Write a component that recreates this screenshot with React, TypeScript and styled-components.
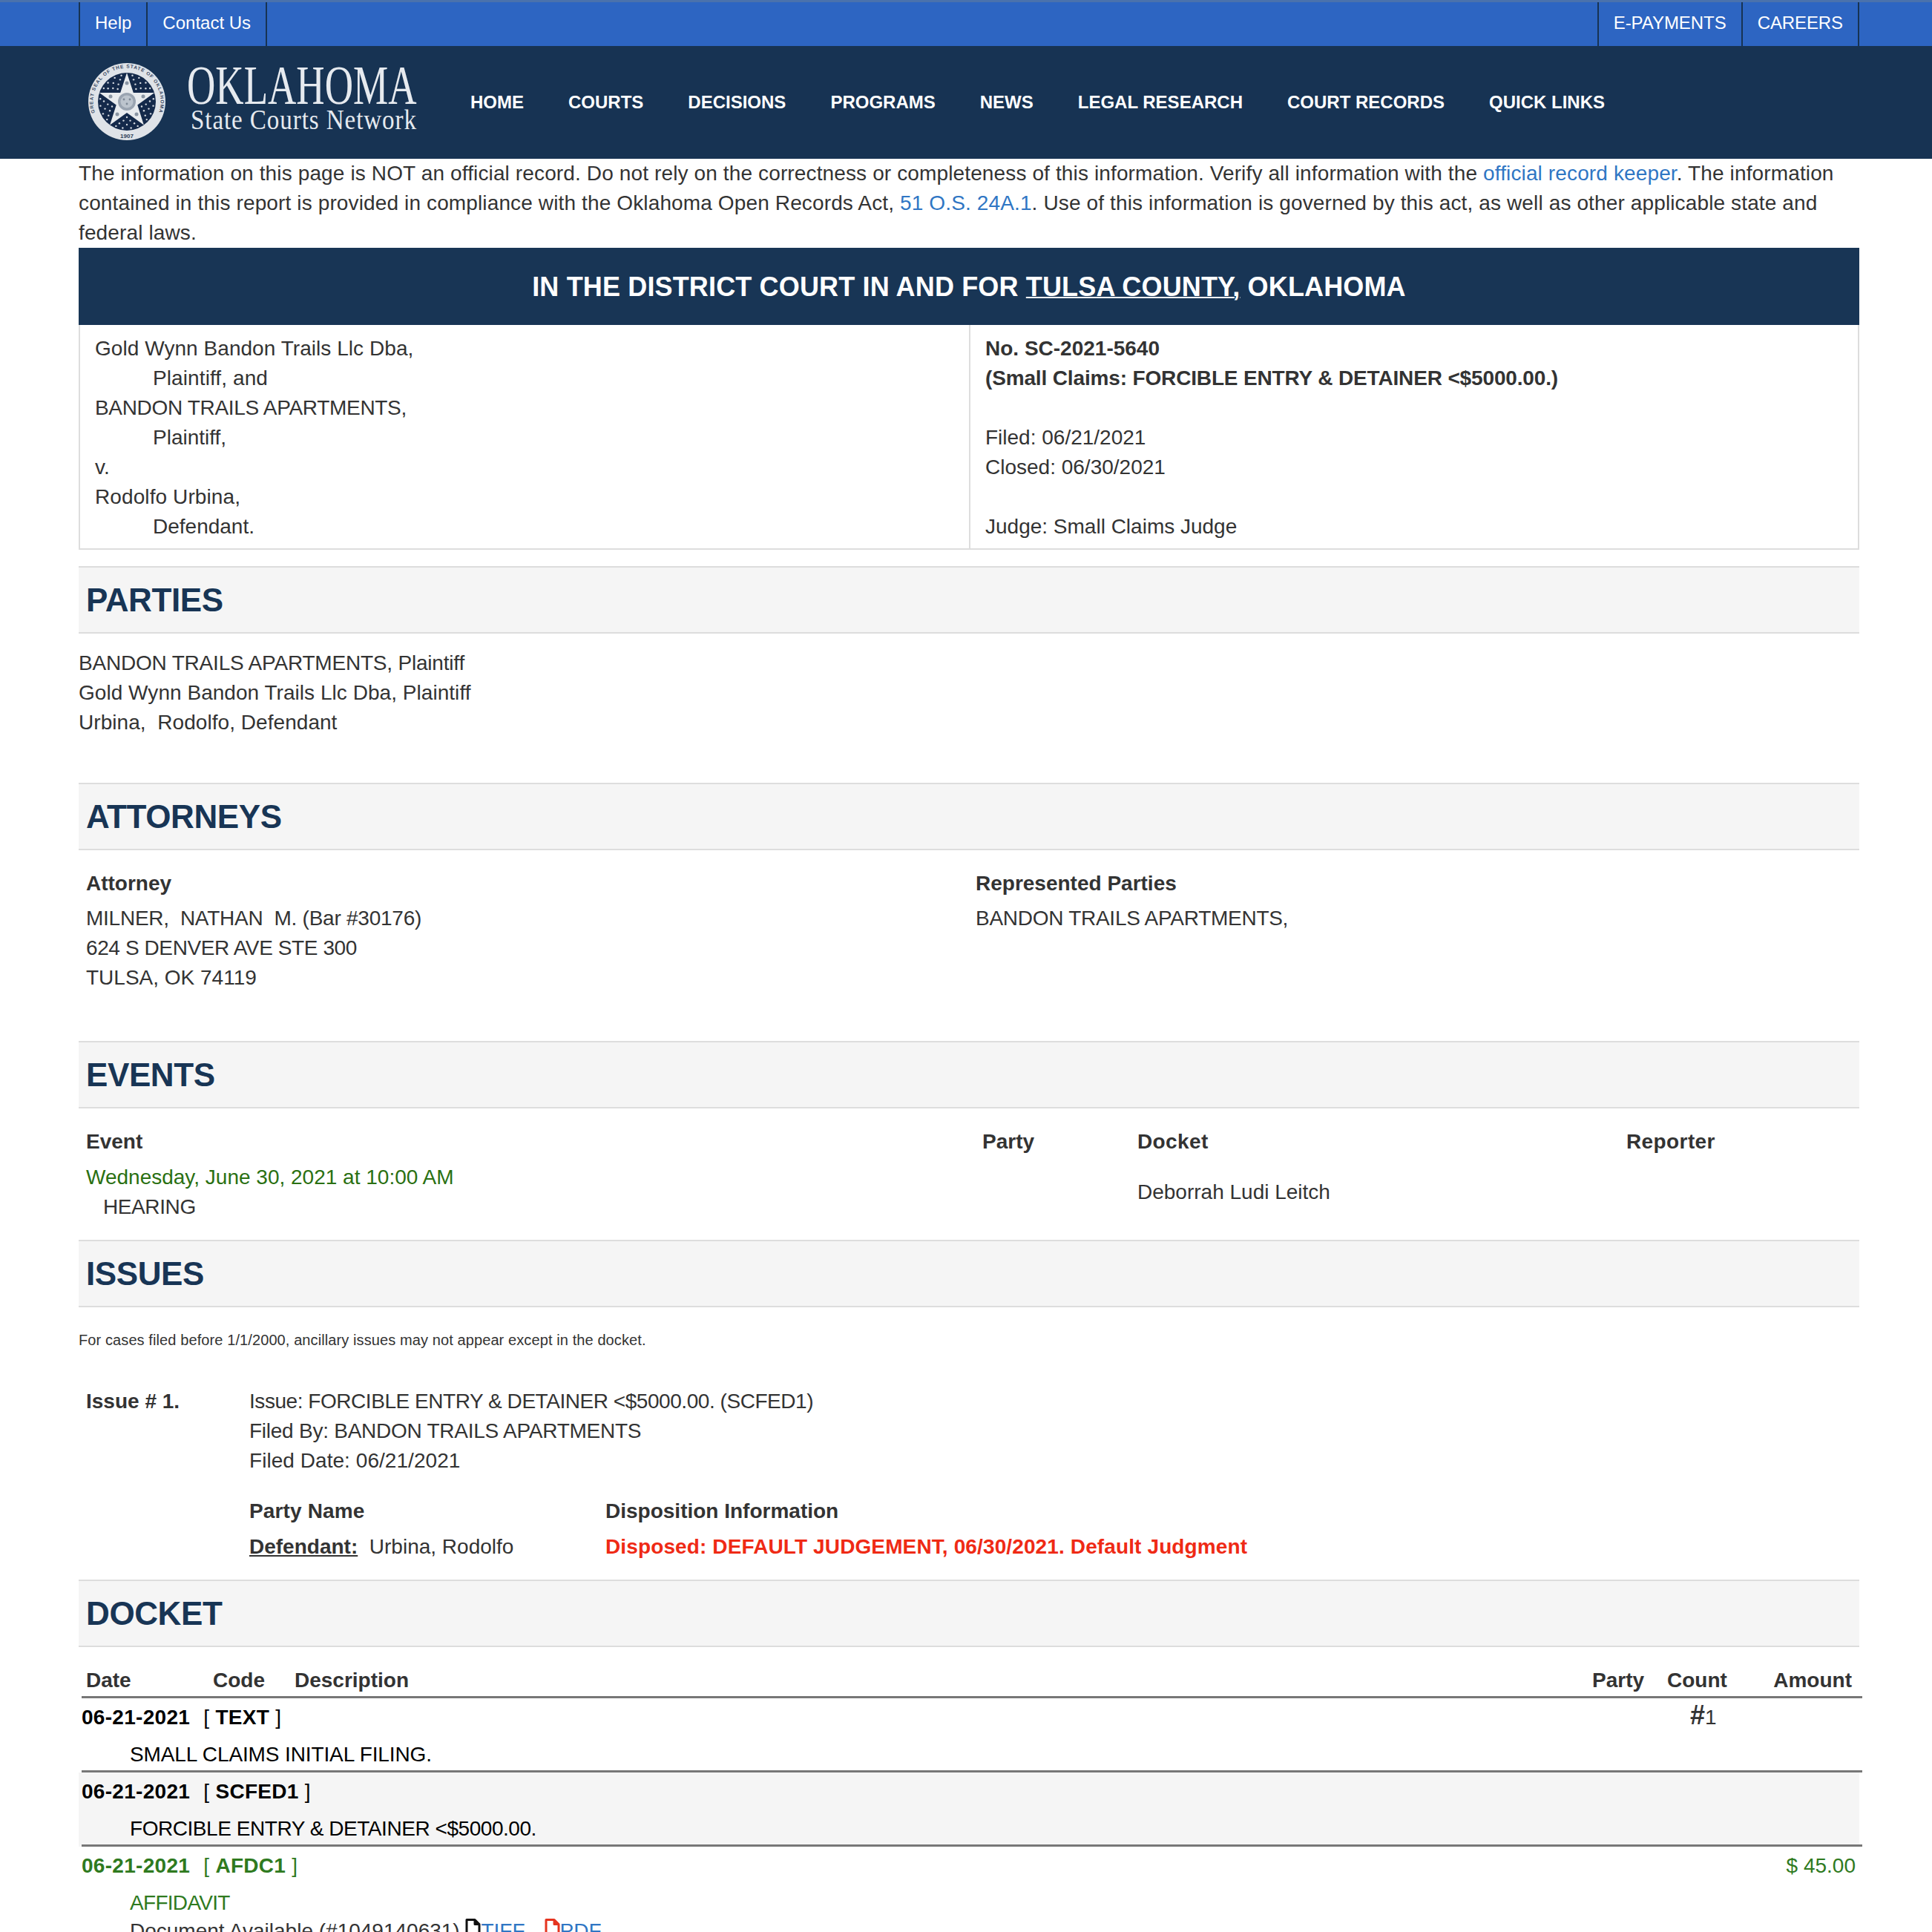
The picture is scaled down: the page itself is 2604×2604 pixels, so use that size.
import React from "react";
import styled, { createGlobalStyle } from "styled-components";

const Global = createGlobalStyle`
  html, body {
    margin: 0;
    padding: 0;
    height: 2604px;
    overflow: hidden;
    background: #fff;
  }
  body {
    font-family: "Liberation Sans", Arial, sans-serif;
    font-size: 28px;
    line-height: 40px;
    color: #333;
  }
  a {
    color: #2f76c4;
    text-decoration: none;
  }
`;

const TopBar = styled.div`
  height: 59px;
  background: #2d65c2;
  border-top: 3px solid #4a72ad;
  padding: 0 98px 0 106px;
  display: flex;
  justify-content: space-between;
`;

const TopLinks = styled.ul`
  display: flex;
  margin: 0;
  padding: 0;
  list-style: none;
  border-left: 2px solid #173353;
`;

const TopLink = styled.li<{ $track?: number }>`
  padding: 0 20px;
  border-right: 2px solid #173353;
  font-size: 24px;
  line-height: 56px;
  letter-spacing: ${(p) => p.$track ?? 0}px;

  a {
    color: #fff;
  }
`;

const Header = styled.header`
  height: 152px;
  background: #173353;
  padding-left: 118px;
  display: flex;
  align-items: center;
`;

const Seal = styled.svg`
  width: 106px;
  height: 106px;
  flex: none;
  margin-top: -2px;
`;

const Brand = styled.div`
  width: 310px;
  margin: -10px 0 0 28px;
  color: #e6eaef;
  font-family: "Liberation Serif", serif;
  white-space: nowrap;
`;

const BrandTitle = styled.div`
  font-size: 74px;
  line-height: 58px;
  transform: scaleX(0.717);
  transform-origin: left center;
`;

const BrandSub = styled.div`
  font-size: 37px;
  line-height: 36px;
  margin-left: 5px;
  letter-spacing: 1px;
  transform: scaleX(0.895);
  transform-origin: left center;
`;

const MainNav = styled.nav`
  display: flex;
  gap: 60px;
  margin-left: 72px;
`;

const NavLink = styled.a`
  color: #fff;
  font-size: 24px;
  font-weight: 700;
  text-transform: uppercase;
`;

const Content = styled.main`
  width: 2400px;
  margin-left: 106px;
`;

const Notice = styled.p`
  margin: 0;
  letter-spacing: 0.13px;
`;

const Banner = styled.h1`
  margin: 0;
  height: 104px;
  background: #183555;
  color: #fff;
  font-size: 36px;
  line-height: 106px;
  font-weight: 700;
  text-align: center;
  letter-spacing: 0.15px;

  u {
    text-decoration-thickness: 2px;
  }
`;

const CaseTable = styled.div`
  display: grid;
  grid-template-columns: 1198px 1fr;
  border: 2px solid #ddd;
  border-top: 0;
`;

const CaseCell = styled.div<{ $divided?: boolean }>`
  padding: 12px 20px 0;
  height: 301px;
  box-sizing: border-box;
  border-left: ${(p) => (p.$divided ? "2px solid #ddd" : "0")};
`;

const Line = styled.div<{ $track?: number; $indent?: number; $bold?: boolean }>`
  padding-left: ${(p) => p.$indent ?? 0}px;
  letter-spacing: ${(p) => p.$track ?? 0}px;
  font-weight: ${(p) => (p.$bold ? 700 : 400)};
  white-space: pre;
`;

const Blank = styled.div`
  height: 40px;
`;

const SectionTitle = styled.h2<{ $top: number }>`
  margin: ${(p) => p.$top}px 0 0;
  height: 87px;
  padding-left: 10px;
  background: #f5f5f5;
  border-top: 2px solid #ddd;
  border-bottom: 2px solid #ddd;
  color: #183555;
  font-size: 44px;
  line-height: 88px;
  font-weight: 700;
  letter-spacing: -0.4px;
`;

const PartyList = styled.div`
  margin-top: 20px;
`;

const Grid = styled.div<{ $cols: string; $top: number }>`
  display: grid;
  grid-template-columns: ${(p) => p.$cols};
  margin-top: ${(p) => p.$top}px;
  padding-left: 10px;
  white-space: pre;
`;

const Label = styled.div<{ $gap?: number; $track?: number }>`
  font-weight: 700;
  margin-bottom: ${(p) => p.$gap ?? 8}px;
  letter-spacing: ${(p) => p.$track ?? 0}px;
`;

const When = styled.div`
  color: #2a7012;
`;

const Middle = styled.div`
  align-self: center;
`;

const Note = styled.p`
  margin: 24px 0 0;
  font-size: 20px;
  line-height: 40px;
  letter-spacing: 0.1px;
`;

const IssueRow = styled.div`
  display: grid;
  grid-template-columns: 220px 1fr;
  margin-top: 43px;
  padding-left: 10px;
`;

const Disposition = styled.div`
  display: grid;
  grid-template-columns: 480px 1fr;
  margin-top: 28px;
`;

const Defendant = styled.div`
  white-space: pre;

  u {
    font-weight: 700;
  }
`;

const Disposed = styled.div`
  color: #ef2a15;
  font-weight: 700;
  letter-spacing: 0.12px;
`;

const DocketHead = styled.div`
  display: grid;
  grid-template-columns: 171px 110px 1749px 101px 85px 1fr;
  width: 2400px;
  box-sizing: border-box;
  margin-top: 25px;
  margin-left: 4px;
  padding: 0 14px 0 6px;
  border-bottom: 3px solid #777;
  font-weight: 700;
  height: 44px;
`;

const AmountHead = styled.span`
  text-align: right;
`;

const Entry = styled.div<{ $shade?: boolean; $green?: boolean }>`
  width: 2400px;
  height: 100px;
  box-sizing: border-box;
  position: relative;
  background: ${(p) => (p.$shade ? "#f5f5f5" : "transparent")};
  color: ${(p) => (p.$green ? "#2f7a1f" : "#000")};
  padding-left: 4px;

  &::after {
    content: "";
    position: absolute;
    left: 4px;
    width: 2400px;
    bottom: 0;
    height: 3px;
    background: ${(p) => (p.$green ? "transparent" : "#777")};
  }
`;

const EntryHead = styled.div`
  display: flex;
  align-items: center;
  height: 52px;
  margin-bottom: 4px;
  font-weight: 700;
  white-space: pre;
  letter-spacing: 0.3px;
`;

const Code = styled.span`
  margin-left: 18px;

  i {
    font-style: normal;
    font-weight: 400;
  }
`;

const CountMark = styled.span`
  position: absolute;
  left: 2172px;
  top: 3px;
  color: #333;
  font-weight: 400;

  b {
    font-size: 36px;
    font-weight: 700;
  }
`;

const Money = styled.span`
  position: absolute;
  right: 5px;
  top: 6px;
  font-weight: 400;
`;

const EntryBody = styled.div`
  padding-left: 65px;
`;

const DocLine = styled.div`
  color: #333;
  display: flex;
  align-items: center;
  white-space: pre;
  margin-top: -2px;
`;

const FileIcon = styled.svg<{ $tone: string }>`
  width: 21px;
  height: 27px;
  flex: none;
  margin-top: -8px;
  color: ${(p) => p.$tone};
`;

const DocLink = styled.a`
  margin-right: 26px;
`;

const starPoints = (cx: number, cy: number, r: number, inner: number) =>
  Array.from({ length: 10 }, (_, i) => {
    const a = (Math.PI / 5) * i - Math.PI / 2;
    const rad = i % 2 === 0 ? r : inner;
    return `${(cx + rad * Math.cos(a)).toFixed(1)},${(cy + rad * Math.sin(a)).toFixed(1)}`;
  }).join(" ");

// dots sit in the five wedges between the star's points
const sealDots = [-54, 18, 90, 162, 234].flatMap((deg) =>
  [
    [21, 0],
    [26, -10],
    [26, 10],
    [31, -19],
    [31, 0],
    [31, 19],
    [36, -24],
    [36, -9],
    [36, 9],
    [36, 24],
  ].map(([rad, off]) => {
    const a = ((deg + off) * Math.PI) / 180;
    return { x: 53 + rad * Math.cos(a), y: 53 + rad * Math.sin(a) };
  })
);

function SealLogo() {
  return (
    <Seal viewBox="0 0 106 106">
      <circle cx="53" cy="53" r="52" fill="#dfe3e8" />
      <circle cx="53" cy="53" r="39" fill="#14294a" />
      <defs>
        <path id="seal-arc" d="M 10 68 A 45.5 45.5 0 1 1 96 68" />
      </defs>
      <text fontSize="6.5" fill="#3a4a63" fontFamily="Liberation Sans, sans-serif" fontWeight="700">
        <textPath href="#seal-arc" textLength="172">
          GREAT SEAL OF THE STATE OF OKLAHOMA
        </textPath>
      </text>
      <text x="53" y="102" fontSize="8" fill="#2c3c56" textAnchor="middle" fontFamily="Liberation Sans, sans-serif" fontWeight="700">
        1907
      </text>
      {sealDots.map((d, i) => (
        <circle key={i} cx={d.x} cy={d.y} r="1.2" fill="#d5dae1" />
      ))}
      <polygon points={starPoints(53, 53, 39, 15)} fill="#e8ebee" />
      <circle cx="53" cy="53" r="12" fill="#9aa4b1" />
      <circle cx="53" cy="53" r="8.5" fill="#bcc4cd" />
      <circle cx="49" cy="50" r="1.4" fill="#7d8896" />
      <circle cx="57" cy="50" r="1.4" fill="#7d8896" />
      <circle cx="53" cy="56" r="1.4" fill="#7d8896" />
      <circle cx="53" cy="28" r="2.5" fill="#8a95a3" />
      <circle cx="31" cy="46" r="2.5" fill="#8a95a3" />
      <circle cx="75" cy="46" r="2.5" fill="#8a95a3" />
      <circle cx="40" cy="70" r="2.5" fill="#8a95a3" />
      <circle cx="66" cy="70" r="2.5" fill="#8a95a3" />
    </Seal>
  );
}

function FileGlyph({ tone }: { tone: string }) {
  return (
    <FileIcon $tone={tone} viewBox="0 0 21 27">
      <path
        d="M2 1.5h11l6 6v18H2zM13 1.5v6h6"
        fill="#fff"
        stroke="currentColor"
        strokeWidth="3"
        strokeLinejoin="round"
      />
    </FileIcon>
  );
}

const navItems = ["Home", "Courts", "Decisions", "Programs", "News", "Legal Research", "Court Records", "Quick Links"];

export default function App() {
  return (
    <>
      <Global />
      <TopBar>
        <TopLinks>
          <TopLink><a href="#help">Help</a></TopLink>
          <TopLink><a href="#contact">Contact Us</a></TopLink>
        </TopLinks>
        <TopLinks>
          <TopLink $track={-0.05}><a href="#pay">E-PAYMENTS</a></TopLink>
          <TopLink $track={-0.1}><a href="#jobs">CAREERS</a></TopLink>
        </TopLinks>
      </TopBar>
      <Header>
        <SealLogo />
        <Brand>
          <BrandTitle>OKLAHOMA</BrandTitle>
          <BrandSub>State Courts Network</BrandSub>
        </Brand>
        <MainNav>
          {navItems.map((item) => (
            <NavLink key={item} href="#nav">{item}</NavLink>
          ))}
        </MainNav>
      </Header>
      <Content>
        <Notice>
          The information on this page is NOT an official record. Do not rely on the correctness or completeness of this information. Verify all information with the <a href="#keeper">official record keeper</a>. The information contained in this report is provided in compliance with the Oklahoma Open Records Act, <a href="#act">51 O.S. 24A.1</a>. Use of this information is governed by this act, as well as other applicable state and federal laws.
        </Notice>
        <Banner>
          IN THE DISTRICT COURT IN AND FOR <u>TULSA COUNTY,</u> OKLAHOMA
        </Banner>
        <CaseTable>
          <CaseCell>
            <Line $track={0.05}>Gold Wynn Bandon Trails Llc Dba,</Line>
            <Line $indent={78} $track={0.1}>Plaintiff, and</Line>
            <Line $track={-0.32}>BANDON TRAILS APARTMENTS,</Line>
            <Line $indent={78}>Plaintiff,</Line>
            <Line>v.</Line>
            <Line $track={0.1}>Rodolfo Urbina,</Line>
            <Line $indent={78}>Defendant.</Line>
          </CaseCell>
          <CaseCell $divided>
            <Line $bold>No. SC-2021-5640</Line>
            <Line $bold $track={-0.15}>(Small Claims: FORCIBLE ENTRY &amp; DETAINER &lt;$5000.00.)</Line>
            <Blank />
            <Line>Filed: 06/21/2021</Line>
            <Line>Closed: 06/30/2021</Line>
            <Blank />
            <Line>Judge: Small Claims Judge</Line>
          </CaseCell>
        </CaseTable>

        <SectionTitle $top={22}>PARTIES</SectionTitle>
        <PartyList>
          <Line $track={-0.2}>BANDON TRAILS APARTMENTS, Plaintiff</Line>
          <Line $track={0.04}>Gold Wynn Bandon Trails Llc Dba, Plaintiff</Line>
          <Line $track={0.05}>Urbina,  Rodolfo, Defendant</Line>
        </PartyList>

        <SectionTitle $top={61}>ATTORNEYS</SectionTitle>
        <Grid $cols="1199px 1fr" $top={25}>
          <div>
            <Label $gap={7}>Attorney</Label>
            <Line $track={-0.25}>MILNER,  NATHAN  M. (Bar #30176)</Line>
            <Line $track={-0.4}>624 S DENVER AVE STE 300</Line>
            <Line>TULSA, OK 74119</Line>
          </div>
          <div>
            <Label $gap={7}>Represented Parties</Label>
            <Line $track={-0.27}>BANDON TRAILS APARTMENTS,</Line>
          </div>
        </Grid>

        <SectionTitle $top={65}>EVENTS</SectionTitle>
        <Grid $cols="1208px 209px 659px 1fr" $top={25}>
          <Label>Event</Label>
          <Label>Party</Label>
          <Label $track={0.4}>Docket</Label>
          <Label $track={0.4}>Reporter</Label>
          <div>
            <When>Wednesday, June 30, 2021 at 10:00 AM</When>
            <Line $indent={23} $track={-0.4}>HEARING</Line>
          </div>
          <div />
          <Middle>Deborrah Ludi Leitch</Middle>
          <div />
        </Grid>

        <SectionTitle $top={24}>ISSUES</SectionTitle>
        <Note>For cases filed before 1/1/2000, ancillary issues may not appear except in the docket.</Note>
        <IssueRow>
          <Line $bold>Issue # 1.</Line>
          <div>
            <Line $track={-0.45}>Issue: FORCIBLE ENTRY &amp; DETAINER &lt;$5000.00. (SCFED1)</Line>
            <Line $track={-0.25}>Filed By: BANDON TRAILS APARTMENTS</Line>
            <Line $track={0.05}>Filed Date: 06/21/2021</Line>
            <Disposition>
              <Label $track={0.15}>Party Name</Label>
              <Label>Disposition Information</Label>
              <Defendant><u>Defendant:</u>  Urbina, Rodolfo</Defendant>
              <Disposed>Disposed: DEFAULT JUDGEMENT, 06/30/2021. Default Judgment</Disposed>
            </Disposition>
          </div>
        </IssueRow>

        <SectionTitle $top={24}>DOCKET</SectionTitle>
        <DocketHead>
          <span>Date</span>
          <span>Code</span>
          <span>Description</span>
          <span>Party</span>
          <span>Count</span>
          <AmountHead>Amount</AmountHead>
        </DocketHead>
        <Entry>
          <EntryHead>06-21-2021<Code><i>[ </i>TEXT<i> ]</i></Code></EntryHead>
          <CountMark><b>#</b>1</CountMark>
          <EntryBody><Line $track={-0.12}>SMALL CLAIMS INITIAL FILING.</Line></EntryBody>
        </Entry>
        <Entry $shade>
          <EntryHead>06-21-2021<Code><i>[ </i>SCFED1<i> ]</i></Code></EntryHead>
          <EntryBody><Line $track={-0.45}>FORCIBLE ENTRY &amp; DETAINER &lt;$5000.00.</Line></EntryBody>
        </Entry>
        <Entry $green>
          <EntryHead>06-21-2021<Code><i>[ </i>AFDC1<i> ]</i></Code></EntryHead>
          <Money>$ 45.00</Money>
          <EntryBody>
            <Line $track={-0.7}>AFFIDAVIT</Line>
            <DocLine>
              Document Available (#1049140631) <FileGlyph tone="#111" /><DocLink href="#tiff">TIFF</DocLink><FileGlyph tone="#e5341f" /><DocLink href="#pdf">PDF</DocLink>
            </DocLine>
          </EntryBody>
        </Entry>
      </Content>
    </>
  );
}
